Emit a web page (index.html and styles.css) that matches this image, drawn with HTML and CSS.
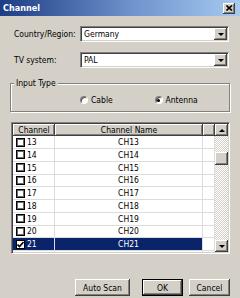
FILE: index.html
```html
<!DOCTYPE html>
<html>
<head>
<meta charset="utf-8">
<link rel="stylesheet" href="styles.css">
</head>
<body>
<div class="dialog">
  <div class="titlebar">
    <span class="title">Channel</span>
    <span class="close"><svg width="7" height="6" viewBox="0 0 7 6"><path d="M0.5 0.5 L6 5.5 M6 0.5 L0.5 5.5" stroke="#000" stroke-width="1.6" fill="none"/></svg></span>
  </div>
  <div class="content">
    <div class="field">
      <span class="label">Country/Region:</span>
      <div class="combo"><span class="value">Germany</span><span class="drop"><i class="tri"></i></span></div>
    </div>
    <div class="field">
      <span class="label">TV system:</span>
      <div class="combo"><span class="value">PAL</span><span class="drop"><i class="tri"></i></span></div>
    </div>
    <fieldset class="group">
      <legend>Input Type</legend>
      <div class="radios">
        <label class="opt"><span class="radio"></span>Cable</label>
        <label class="opt"><span class="radio on"></span>Antenna</label>
      </div>
    </fieldset>
    <div class="list">
      <div class="grid">
        <div class="head"><span>Channel</span><span>Channel Name</span><span></span></div>
        <div class="row"><span class="c1"><i class="cb"></i>13</span><span class="c2">CH13</span><span class="c3"></span></div>
        <div class="row"><span class="c1"><i class="cb"></i>14</span><span class="c2">CH14</span><span class="c3"></span></div>
        <div class="row"><span class="c1"><i class="cb"></i>15</span><span class="c2">CH15</span><span class="c3"></span></div>
        <div class="row"><span class="c1"><i class="cb"></i>16</span><span class="c2">CH16</span><span class="c3"></span></div>
        <div class="row"><span class="c1"><i class="cb"></i>17</span><span class="c2">CH17</span><span class="c3"></span></div>
        <div class="row"><span class="c1"><i class="cb"></i>18</span><span class="c2">CH18</span><span class="c3"></span></div>
        <div class="row"><span class="c1"><i class="cb"></i>19</span><span class="c2">CH19</span><span class="c3"></span></div>
        <div class="row"><span class="c1"><i class="cb"></i>20</span><span class="c2">CH20</span><span class="c3"></span></div>
        <div class="row sel"><span class="c1"><i class="cb checked"><svg width="7" height="7" viewBox="0 0 7 7"><path d="M0.5 3.5 L2.5 5.5 L6.5 1" stroke="#000" stroke-width="1.6" fill="none"/></svg></i>21</span><span class="c2">CH21</span><span class="c3"></span></div>
        <div class="row"><span class="c1"><i class="cb"></i></span><span class="c2"></span><span class="c3"></span></div>
      </div>
      <div class="vscroll">
        <span class="sbtn"><i class="tri up"></i></span>
        <span class="track"><span class="thumb"></span></span>
        <span class="sbtn"><i class="tri"></i></span>
      </div>
    </div>
    <div class="buttons">
      <button class="btn scan">Auto Scan</button>
      <button class="btn ok">OK</button>
      <button class="btn cancel">Cancel</button>
    </div>
  </div>
</div>
</body>
</html>
```
FILE: styles.css
```css
* { box-sizing: border-box; }
html, body { margin: 0; padding: 0; }
body {
  width: 240px;
  height: 298px;
  overflow: hidden;
  background: #d4d0c8;
  font-family: "DejaVu Sans Condensed", "Liberation Sans", sans-serif;
  font-size: 8.5px;
  color: #000;
}
.dialog { width: 240px; height: 298px; background: #d4d0c8; }

.titlebar {
  height: 16px;
  display: flex;
  align-items: center;
  justify-content: space-between;
  padding: 0 5px 0 3px;
  background: linear-gradient(to right, #1c3c84, #6f93cc 55%, #a6caf0);
}
.title { color: #fff; font-weight: bold; font-size: 9px; }
.close {
  width: 12px;
  height: 11px;
  background: #d4d0c8;
  box-shadow: inset -1px -1px #404040, inset 1px 1px #fff, inset -2px -2px #808080;
  display: flex;
  align-items: center;
  justify-content: center;
}

.content { padding: 10px 10px 0 10px; }

.field { display: flex; align-items: center; height: 16px; }
.field + .field { margin-top: 10px; }
.label { width: 70px; padding-left: 4px; white-space: nowrap; }
.combo {
  width: 149px;
  height: 16px;
  display: flex;
  background: #fff;
  border: 1px solid;
  border-color: #808080 #fff #fff #808080;
  box-shadow: inset 1px 1px #404040, inset -1px -1px #d4d0c8;
  padding: 1px;
}
.value { flex: 1; padding-left: 2px; line-height: 12px; }
.drop, .sbtn {
  width: 13px;
  height: 12px;
  background: #d4d0c8;
  box-shadow: inset -1px -1px #404040, inset 1px 1px #fff, inset -2px -2px #808080;
  display: flex;
  align-items: center;
  justify-content: center;
  flex: none;
}
.tri {
  width: 0;
  height: 0;
  border-left: 3px solid transparent;
  border-right: 3px solid transparent;
  border-top: 3px solid #000;
}
.tri.up { border-top: 0; border-bottom: 3px solid #000; }

.group {
  margin: 10px 0 0 0;
  padding: 7px 0 6px 0;
  width: 220px;
  min-width: 0;
  border: 1px solid #808080;
  box-shadow: inset 1px 1px #fff, 1px 1px #fff;
}
.group legend {
  padding: 0 2px;
  margin-left: 3px;
  line-height: 10px;
  background: #d4d0c8;
}
.radios { display: flex; align-items: center; height: 10px; padding-left: 69px; }
.opt { width: 85px; display: flex; align-items: center; gap: 3px; }
.radio {
  width: 8px;
  height: 8px;
  border-radius: 50%;
  background: #fff;
  border: 1px solid;
  border-color: #808080 #fff #fff #808080;
  box-shadow: inset 1px 1px #404040;
  display: flex;
  align-items: center;
  justify-content: center;
}
.radio.on::after {
  content: "";
  width: 3px;
  height: 3px;
  border-radius: 50%;
  background: #000;
}

.list {
  margin: 10px 0 0 1px;
  width: 219px;
  height: 132px;
  display: flex;
  background: #fff;
  border: 1px solid;
  border-color: #808080 #fff #fff #808080;
  box-shadow: inset 1px 1px #404040, inset -1px -1px #d4d0c8;
  padding: 1px;
}
.grid { flex: 1; overflow: hidden; display: flex; flex-direction: column; }
.head, .row {
  display: grid;
  grid-template-columns: 42px 148px 1fr;
  flex: none;
}
.head { height: 12px; }
.head span {
  background: #d4d0c8;
  box-shadow: inset -1px -1px #404040, inset 1px 1px #fff, inset -2px -2px #808080;
  text-align: center;
  line-height: 12px;
}
.row { height: 12.75px; }
.row span {
  border-right: 1px solid #dcdcdc;
  border-bottom: 1px solid #dcdcdc;
  line-height: 12px;
  white-space: nowrap;
}
.c1 { display: flex; align-items: center; padding-left: 3px; gap: 2px; }
.c2 { text-align: center; }
.row.sel .c1, .row.sel .c2 { background: #0a246a; color: #fff; }
.cb {
  width: 9px;
  height: 9px;
  flex: none;
  background: #fff;
  border: 1px solid #000;
  box-shadow: inset 0 0 0 1px #6a6a6a;
  display: flex;
  align-items: center;
  justify-content: center;
}
.cb.checked { box-shadow: none; }

.vscroll { width: 13px; display: flex; flex-direction: column; flex: none; }
.track {
  flex: 1;
  background: repeating-conic-gradient(#fff 0 25%, #d4d0c8 0 50%) 0 0 / 2px 2px;
}
.thumb {
  display: block;
  margin-top: 16px;
  height: 13px;
  background: #d4d0c8;
  box-shadow: inset -1px -1px #404040, inset 1px 1px #fff, inset -2px -2px #808080;
}

.buttons { display: flex; justify-content: flex-end; margin-top: 25px; }
.btn {
  font: inherit;
  color: #000;
  height: 17px;
  padding: 0;
  border: none;
  background: #d4d0c8;
  box-shadow: inset -1px -1px #404040, inset 1px 1px #fff, inset -2px -2px #808080;
}
.scan { width: 55px; margin-right: 12px; }
.ok {
  width: 41px;
  margin-right: 6px;
  box-shadow: inset 0 0 0 1px #000, inset -2px -2px #404040, inset 2px 2px #fff, inset -3px -3px #808080;
}
.cancel { width: 41px; }
```
